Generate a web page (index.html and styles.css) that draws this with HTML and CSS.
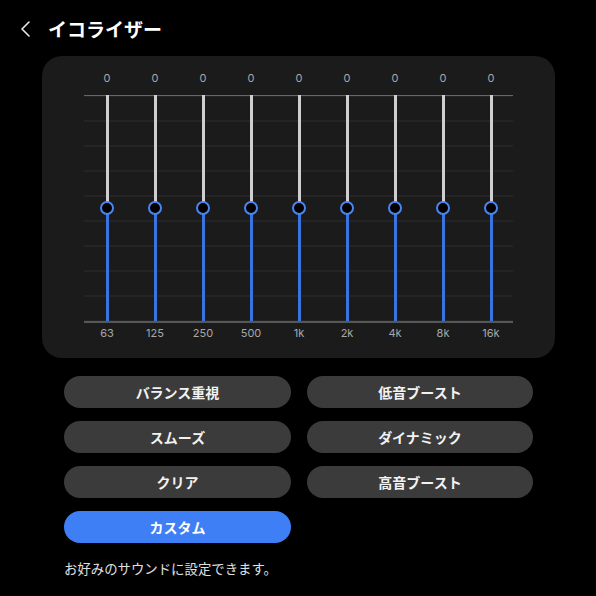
FILE: index.html
```html
<!DOCTYPE html>
<html lang="ja">
<head>
<meta charset="utf-8">
<link rel="stylesheet" href="styles.css">
</head>
<body>
<header class="header">
  <svg class="back" width="12" height="18" viewBox="0 0 12 18"><polyline points="9,2 2,9 9,16" fill="none" stroke="#e8e8e8" stroke-width="1.6" stroke-linecap="round" stroke-linejoin="round"/></svg>
  <h1 class="title">イコライザー</h1>
</header>
<section class="panel">
  <div class="chart">
    <div class="plot"></div>
    <div class="bands">
      <div class="band"><span class="val">0</span><div class="track"><span class="knob"></span></div><span class="freq">63</span></div>
      <div class="band"><span class="val">0</span><div class="track"><span class="knob"></span></div><span class="freq">125</span></div>
      <div class="band"><span class="val">0</span><div class="track"><span class="knob"></span></div><span class="freq">250</span></div>
      <div class="band"><span class="val">0</span><div class="track"><span class="knob"></span></div><span class="freq">500</span></div>
      <div class="band"><span class="val">0</span><div class="track"><span class="knob"></span></div><span class="freq">1k</span></div>
      <div class="band"><span class="val">0</span><div class="track"><span class="knob"></span></div><span class="freq">2k</span></div>
      <div class="band"><span class="val">0</span><div class="track"><span class="knob"></span></div><span class="freq">4k</span></div>
      <div class="band"><span class="val">0</span><div class="track"><span class="knob"></span></div><span class="freq">8k</span></div>
      <div class="band"><span class="val">0</span><div class="track"><span class="knob"></span></div><span class="freq">16k</span></div>
    </div>
  </div>
</section>
<section class="presets">
  <button class="preset">バランス重視</button>
  <button class="preset">低音ブースト</button>
  <button class="preset">スムーズ</button>
  <button class="preset">ダイナミック</button>
  <button class="preset">クリア</button>
  <button class="preset">高音ブースト</button>
  <button class="preset active">カスタム</button>
</section>
<p class="note">お好みのサウンドに設定できます。</p>
</body>
</html>
```

FILE: styles.css
```css
* { box-sizing: border-box; }
html, body { margin: 0; padding: 0; background: #000; }
body {
  width: 596px; height: 596px; overflow: hidden;
  font-family: "Noto Sans CJK JP", "Noto Sans", sans-serif;
  color: #fff;
}
.header {
  display: flex; align-items: center;
  height: 57px; padding: 0 0 0 20px;
}
.back { display: block; margin-right: 16px; margin-top: 1px; }
.title {
  margin: 0; font-size: 19px; font-weight: 700; letter-spacing: 0;
  line-height: 26px;
}
.panel {
  margin-left: 42px; width: 513px; height: 302px;
  background: #1b1b1b; border-radius: 20px;
  padding: 14px 40px 0 41px;
  margin-top: -1px;
}
.chart { display: grid; }
.plot, .bands { grid-area: 1 / 1; }
.plot {
  margin: 25px 2px 0 1px;
  height: 228px;
  border-top: 1.5px solid #666;
  border-bottom: 2px solid #575757;
  background: repeating-linear-gradient(to bottom, transparent 0 23.6px, #2e2e2e 23.6px 24.6px, transparent 24.6px 25.1px);
  background-position: 0 0.5px;
}
.bands { display: grid; grid-template-columns: repeat(9, 48px); }
.band { display: flex; flex-direction: column; align-items: center; }
.val, .freq {
  font-family: "Inter", "Noto Sans", sans-serif;
  font-size: 11px; line-height: 16px; color: #a8a8a8;
}
.track {
  position: relative; width: 3px; height: 226px; margin-top: 9px;
  background: linear-gradient(to bottom, #cfcfcf 0 50%, #3a74e0 50% 100%);
}
.knob {
  position: absolute; left: 50%; top: 50%;
  width: 14px; height: 14px; margin: -7px 0 0 -7px;
  border-radius: 50%; background: #000; border: 2.4px solid #4a86f2;
}
.freq { margin-top: 4px; }
.presets {
  display: grid; grid-template-columns: 227px 226px;
  column-gap: 16px; row-gap: 13px;
  margin: 18px 0 0 64px;
}
.preset {
  height: 32px; border: 0; border-radius: 16px;
  background: #3b3b3b; color: #f2f2f2;
  font-family: "Noto Sans CJK JP", sans-serif;
  font-size: 14px; font-weight: 700; padding: 0;
}
.preset.active { background: #3f7ff6; color: #fff; }
.note {
  margin: 16px 0 0 64px; font-size: 13.4px; line-height: 18px; color: #e0e0e0;
}
```
